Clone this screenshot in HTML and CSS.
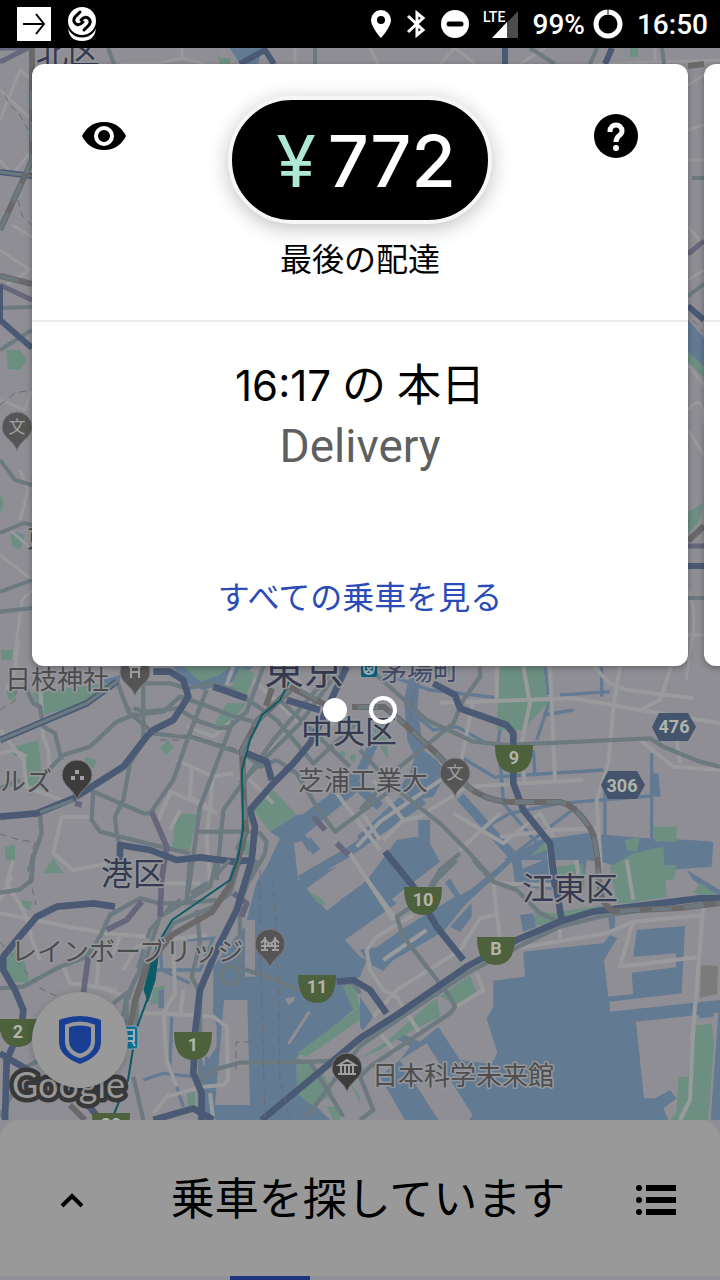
FILE: index.html
```html
<!DOCTYPE html>
<html lang="ja">
<head>
<meta charset="utf-8">
<meta name="viewport" content="width=device-width, initial-scale=1">
<title>乗車を探しています</title>
<link rel="stylesheet" href="styles.css">
</head>
<body>
<div class="screen">
  <svg class="map" viewBox="0 0 720 1280" preserveAspectRatio="xMidYMid slice" role="img" aria-label="地図">
    <rect class="land" width="720" height="1280"/>

    <!-- water -->
    <g class="water">
      <g transform="translate(0 640) scale(.33333)">
        <path d="M1080 430L1010 455L930 520L890 525L810 575L840 595L800 680L770 725L735 860L700 900L640 980L640 1100L600 1300L610 1440H2160V640H1440L1180 560Z"/>
        <path d="M520 80L560 130L610 150L700 125L760 80Z"/>
        <path d="M310 120L360 105L360 135L320 140Z"/>
      </g>
      <path d="M230 48L262 48L258 64L240 64Z"/>
    </g>

    <!-- reclaimed ground and canals -->
    <g transform="translate(360 860) scale(.33333)">
      <path class="land" d="M110 130L20 62L-100 152L-160 85L-70 20L-185 62L-198 -50L-175 -58L-155 -25L-140 -45L-165 -75L10 -220L120 -330L330 -60L560 -200L1080 -200V420L1000 428L750 455L748 425L965 400L975 198L830 210L820 290L948 280L948 322L815 338L820 402L745 410L732 300L772 235L750 225L730 250L515 272L490 275L495 350L400 362L400 440L380 475L412 578L395 612L300 600L235 500L180 545L150 560L120 600L200 550L290 690L338 765L320 790L235 780L120 600L60 650L140 790H-80L-150 720L-190 650V590L-20 450L-50 380L0 350L20 300L0 290L-45 240Z"/>
      <path class="land" d="M828 485L1015 465L1020 475L1058 472L1062 458L1075 458L1052 780H925L910 745L950 715L930 690L885 715L852 715Z"/>
      <g class="water">
        <path d="M0 80L20 62L110 -60L170 -70L240 5L130 90L0 195L-30 225L-60 120ZM0 270L20 300L40 318L70 332L100 300L250 215L310 140L330 120L440 20L470 -10L440 0L330 90L300 105L270 55L255 68L285 110L130 205L50 262Z"/>
        <path d="M270 200L335 130L335 170L300 215ZM480 30L550 0L570 -20L575 90L490 80ZM480 165L520 160L530 200L490 215ZM745 170L765 170L765 210L750 215ZM100 530L125 520L180 545L150 560Z"/>
        <path d="M430 0L540 -60L680 -80L860 -65L990 -60L1060 -55L1055 20L920 30L820 35L740 10L680 0L670 90L650 0Z"/>
        <path d="M980 30L1080 90V120L1000 60ZM0 410L40 470L10 510L0 500Z"/>
      </g>
    </g>

    <g class="canal" transform="translate(360 640) scale(.33333)">
      <path class="fill" d="M150 100L180 110L172 200L190 330L230 360L260 400L220 470L160 480L120 440L150 400L165 350L142 300L132 180ZM175 540L210 540L210 610L240 665L110 740L60 700L175 620ZM870 400L895 400L902 470L870 470Z"/>
      <path class="wide" d="M300 470L470 660L480 740M0 600L130 480M-180 720L-40 640L60 570L190 480M-240 590L-90 480L0 400L50 290M60 500L-50 400M-160 600L-130 635"/>
      <path d="M875 340V600M735 390V610M410 410L730 390M380 560L450 520L600 490L870 468M440 660L650 500M0 60L40 30M70 100L210 150L430 175L560 165M555 80L565 165M435 180L415 300L430 480M570 180L530 300M550 225L640 210M725 80V170M160 220L220 270L290 260L380 310M310 355L410 415M600 165L750 155M520 330L525 410M430 490L540 620"/>
    </g>

    <!-- Shinagawa quays -->
    <g transform="translate(0 860) scale(.33333)">
      <path class="land" d="M735 180H765V350H735ZM672 420H742L750 735H645ZM855 415L885 410L880 425L865 435ZM600 400L625 400L650 500V560L610 620ZM470 340L560 370L580 620L420 660L470 430Z"/>
      <path class="quay" d="M865 552L928 455"/>
      <path class="canal" d="M560 240L640 235L600 330L470 330M515 470L510 620L550 740M430 660L490 640L580 650M480 240L485 330L570 370M620 590V720"/>
      <path class="water" d="M475 388H492V445H475ZM755 440L775 430V780H755Z"/>
    </g>

    <!-- parks -->
    <g class="park">
      <g transform="translate(0 640) scale(.33333)">
        <path d="M95 160L350 125L330 150L260 190L130 225ZM30 325L115 300L125 400L90 470L75 400L80 360L40 345ZM255 350L290 360L280 385L255 375ZM480 325L505 300L520 320L500 345ZM550 80H690L660 105L600 125ZM720 80L765 100L740 165L690 150ZM680 190L740 190L700 240L660 265L645 250ZM525 545L550 520L590 525L570 630L515 625ZM760 510L820 450L890 525L810 575ZM15 620L45 615V670L15 655ZM130 700L160 655L190 700ZM5 30H38V60L5 55ZM730 600H748V645H730ZM20 150L50 150L45 180H25Z"/>
        <path d="M1580 80L1630 80L1642 190L1570 270H1490L1500 80M1320 80H1350V110ZM1960 560H2030V605H1965ZM1875 600L1920 590L1910 635L1880 630ZM1950 675H2030L2020 720H1940ZM1120 270L1155 240L1165 360L1140 320ZM1020 335L1035 332L1035 350L1020 350ZM1050 345L1068 342L1065 365L1050 360Z"/>
      </g>
      <g transform="translate(0 860) scale(.33333)">
        <path d="M20 300L60 250L75 310L90 370L40 365L15 340ZM65 120L97 125L90 150L65 140ZM460 385L495 375V390H475V430L450 435ZM920 90L970 120L975 135L955 130ZM890 590L970 640L1000 700L940 740L890 700ZM890 580L1080 440V480L920 590ZM1030 380L1060 370L1080 440L1060 450ZM560 700L585 695V740L565 740ZM980 740L1020 740V780H1000ZM1040 650L1080 710V730Z"/>
      </g>
      <g transform="translate(360 860) scale(.33333)">
        <path d="M0 595L85 540L210 430L330 345L350 395L290 440L230 400L240 470L160 510L60 570ZM525 150L570 160L730 135L700 160L590 195L525 195ZM590 20L670 10V80L600 120ZM750 20L820 -20L910 -40L920 110L810 130L770 130ZM1000 100L1020 70L1080 110V120ZM1010 495L1055 492L1062 550L1045 780H930L950 755L955 650L985 650ZM510 -10L560 -60L560 -30Z"/>
      </g>
      <path d="M6 350L20 350L27 360L20 370L8 369ZM0 494Q6 503 0 513ZM10 530L25 535L20 550L12 546ZM1 650H12V660H1ZM688 352L704 366V378L688 362ZM688 512L704 503L698 523L688 533ZM216 50L220 64H230V58H220L214 48ZM630 48H638V57H630Z"/>
    </g>
    <path class="water" d="M688 320L704 338V366L688 352Z"/>
    <path class="station-yard" d="M701 965L718 966L717 994L700 998Z"/>

    <!-- minor streets -->
    <g class="street">
      <g transform="translate(0 640) scale(.33333)">
        <path d="M0 270L70 360L80 440L210 490M150 50L120 130L130 290L145 330L150 400M55 0L45 90L20 150M185 530L160 640L220 690L330 670M185 530H270M530 360L640 410L700 400M575 380L570 470L640 510M640 400L620 600L630 720M500 450L570 480L650 520M470 550L510 460M700 240L640 290L560 260M700 80L670 160M760 120L900 250M860 80L1000 250M900 250L790 350M1000 250L900 350M730 400L820 490M0 340L40 330L80 350M510 570L540 510"/>
        <path d="M1320 188L1720 175L1920 210L2160 250M1570 80L1590 190L1560 330L1575 430M1650 80L1665 420M1860 80L1840 200L1825 370L1790 480L1805 720M1420 180L1380 380L1140 545L1070 620M1490 80V180M1780 80L1830 130L1880 150L2080 175M2020 60L1980 180L1920 210M2020 230L2040 370M1920 300L2020 380L2160 390M1210 540L1260 530L1400 440L1750 420M1080 510L1140 600M1500 590L1660 570L1800 565M1640 570L1655 720M1360 520L1510 610L1620 520L1660 590M1380 630L1500 520M1010 460L1140 630M1050 640L1180 840M1120 420L1210 540L1150 600"/>
      </g>
      <g transform="translate(0 860) scale(.33333)">
        <path d="M0 160L80 175L230 205L320 220L440 230M40 0L20 70L70 150L100 250L120 300M300 230L290 380L380 410M430 460H490L640 470L680 500L685 660L670 675L610 680L500 710M490 460L500 600L530 680M520 240L525 400L490 460M550 390L540 470M370 330L410 260L500 240L620 225M0 120L35 50M190 320L210 370L350 390M450 70L600 70M360 230L330 300M510 700L460 760M630 700L640 780"/>
      </g>
      <g transform="translate(360 860) scale(.33333)">
        <path d="M0 30L110 180M160 165L50 230L20 270L30 330L70 390L110 410L180 520M40 470L110 390L300 270L360 175L405 165M400 70L420 240M470 265L740 220L820 185L1030 165M1030 140L1000 500L990 720L960 780M820 180L780 320L1010 292M800 0L820 120M350 340L370 390L290 440M60 520L110 580M600 200V235M650 0L655 50L580 75L400 70M70 300L200 210"/>
      </g>
      <path d="M0 90L32 120M0 120L20 70L32 80M0 160L12 175L32 150M0 250L30 270L6 285M12 225L32 237M0 400L25 410L32 390M20 470L28 490L20 520M0 555L32 580M14 660L22 600L32 590M10 530L30 548M688 85L704 75M688 130L704 125M688 160H704M688 226L704 246M688 280L704 270M688 365L704 385M688 410Q704 390 704 425M688 430L704 455M688 590Q697 610 692 640L686 680M704 635H688M182 48V58L160 63M182 58L205 64M120 64L160 63M370 48L378 64M440 64L455 48L475 64M520 64L545 48M590 64L720 60M655 48V62M295 48V64"/>
    </g>

    <!-- main roads -->
    <g class="road">
      <g transform="translate(0 640) scale(.33333)">
        <path d="M70 130L100 190L120 200L130 260L165 280L185 360M150 385L190 345L270 320L350 245L400 225L490 215L540 170L600 190L690 225L760 245M0 445L60 420M430 130V300M350 120L385 215L460 280L540 290H570L740 345L780 380L830 360M430 130L510 130L560 145L640 130L700 150L760 190L830 240L940 370L1080 240M400 205L440 215L530 205L600 245L660 265L690 260L740 215L790 80M620 150L565 290L520 420L450 520H430L360 490L270 450M440 290L390 370L370 480L345 530L350 580L360 620V700M280 450L275 540L300 575L440 610L570 640M700 240L600 500L570 720L560 780M1000 90L820 300L670 510L650 720M590 575H740L780 580L800 605L795 640L750 720M830 360L890 400L950 500L1005 575L1200 430M120 520L125 580L100 650L95 720M1040 60L900 250L720 430M840 180L1050 380"/>
        <path d="M1080 60L1180 150L1280 240L1420 305L1520 315L1950 295L1990 320L2100 365L2160 380M1440 80V110L1390 180L1360 250L1200 380L1080 510M1080 330L1180 440L1320 550L1400 630L1480 720M1380 640L1320 690L1290 740"/>
      </g>
      <g transform="translate(0 860) scale(.33333)">
        <path d="M0 98L60 88L95 60V0M0 385L70 380L180 320L260 290L300 230L330 165L420 115L480 130H550L650 120M600 780V400L575 350L600 250L590 150M770 0L720 130V320M600 670L640 630L720 608L930 605L1080 600M400 650L430 780M0 770L80 620L120 600M1030 770L930 605M560 120L570 0M650 0L630 80L480 170L440 290L380 410V500M340 430L380 400L370 470M720 0L690 100L640 140L520 190L460 290L410 420V500"/>
        <circle cx="690" cy="345" r="28"/>
        <path d="M725 325L800 350L900 390M1010 365L1060 370L1080 400"/>
      </g>
      <g transform="translate(360 860) scale(.33333)">
        <path d="M340 0L400 65L470 90L540 160L600 185M290 0L230 60L200 110L110 170L130 230L270 410L285 440L270 460L30 620L0 650L40 750L0 780M-160 770L0 558L105 485L320 340L480 258L600 200L720 170L850 150"/>
      </g>
      <path d="M0 460L15 480L32 485M0 533L24 523L32 525M0 592L32 580M0 308L32 307M0 350L32 330M0 612L32 608M692 178H704M688 296L704 284M688 598H704M108 48L114 64M315 48V64M530 48L555 64M590 64L597 48M662 48L664 64"/>
    </g>

    <g class="branch">
      <g transform="translate(0 640) scale(.33333)"><path d="M455 515L500 620L485 720L480 830M940 530L975 570M1010 610L1045 645M225 490L245 495"/></g>
      <g transform="translate(0 860) scale(.33333)"><path d="M425 125L380 180L320 210M265 290L250 400M700 100L740 130L725 170"/></g>
      <path d="M0 285L32 300M0 48H28L0 62M688 254L704 241M688 546H704"/>
    </g>

    <!-- expressways -->
    <g class="express">
      <g transform="translate(0 640) scale(.33333)">
        <path d="M0 300L260 190L350 125M0 530L110 520L220 475L370 380L440 290L460 270L520 240L565 170L550 120L510 95L460 95M360 700V615L450 630L530 660L600 652L700 665L755 660L765 560L750 510L820 430L880 370L930 310L970 230L1040 80M740 340L800 365L815 420M860 180L960 210M1300 130L1365 165L1380 205L1520 255L1540 280V430L1570 510L1650 610L1665 740M1155 635L1240 740L1310 860L1390 960M640 140L740 175"/>
      </g>
      <g transform="translate(0 860) scale(.33333)">
        <path d="M345 140L280 130L170 140L110 170L50 240L10 290V330L45 390L70 450L65 500L20 600L15 780M755 0L710 150L650 270L600 390L585 520L580 640L605 700V780M0 580L100 640M460 780L580 745L640 780M1010 365L1060 360L1110 390L1160 460M785 780L1080 535L1190 465L1400 320L1550 240L1680 185L1780 155L2100 115H2160M1655 0L1685 180M230 690L300 780"/>
      </g>
      <path d="M0 172L32 176M0 285V320L32 348M688 306L704 320M688 566H704M505 48V64M605 64L612 48M240 64L265 50L274 64"/>
    </g>
    <g class="road inner">
      <g transform="translate(0 640) scale(.33333)">
        <path d="M0 300L260 190L350 125M120 517L220 480"/>
      </g>
      <path d="M0 172L32 176M0 611L32 608"/>
    </g>

    <!-- railways -->
    <g class="rail">
      <path d="M32 48V160L0 230M0 276L32 284M688 66L704 64M688 541L704 526M352 707H384L400 720L437 754L455 773Q475 800 510 802H560Q575 805 590 828Q597 840 599 880Q601 908 615 911L680 908L720 903M290 687L328 706M272 688L266 706M290 690L258 720L242 750L244 800L246 830L238 860L230 885L212 912L172 935L147 965L135 1000L128 1040M242 850L245 820M70 1105L85 1120"/>
    </g>
    <g class="rail-gap">
      <path d="M32 90V160L0 230M0 276L32 284M358 707H384L400 720L437 754L455 773Q475 800 510 802H560Q575 805 590 828Q597 840 599 880M620 911L680 908L720 903M300 690L328 706M290 690L258 720L242 750L244 800L246 830L234 855L212 880L172 905L150 930L128 1000"/>
    </g>
    <path class="loop-line" d="M289 682L280 700L262 715L250 740L242 770L243 830L238 858L230 880L172 920L157 945L153 970L147 1000L136 1030L128 1080L114 1114"/>
    <path class="loop-bed" d="M153 960L157 957L154 980L148 998L145 990Z"/>
    <g class="tunnel">
      <path d="M127 705L160 740L180 740L190 735L240 750M0 834L20 840L35 842L28 870L36 905M0 942L40 988L58 997M5 95L10 105L20 115L28 130M0 405L15 393L32 390M18 200L22 215L32 225M693 320L703 332M0 710L16 700V690M260 870V930L265 1120M273 880L278 960L280 1080L290 1120M410 720L417 675M236 1070V1042H250"/>
    </g>

    <!-- road shields -->
    <g class="shields">
      <path d="M495 745H533Q533 773 514 773T495 745ZM404 887H442Q442 915 423 915T404 887ZM477 937H515Q515 965 496 965T477 937ZM298 975H336Q336 1003 317 1003T298 975ZM174 1032H212Q212 1060 193 1060T174 1032ZM-1 1019H37Q37 1047 18 1047T-1 1019ZM92 1113H130Q130 1141 111 1141T92 1113Z"/>
      <text x="514" y="764">9</text><text x="423" y="906">10</text><text x="496" y="955">B</text><text x="317" y="993">11</text><text x="193" y="1051">1</text><text x="18" y="1038">2</text><text x="111" y="1131">20</text>
    </g>
    <g class="shields route">
      <path d="M659 713H688L696 727L688 741H659L652 727ZM608 771H637L645 785L637 799H608L601 785Z"/>
      <text x="674" y="733">476</text><text x="622" y="792">306</text>
    </g>

    <!-- stations and pins -->
    <g class="station"><rect x="361" y="660" width="16" height="17" rx="2"/><path d="M364 665Q363 674 369 674T374 665M366 672L372 667M367 667L372 673"/></g>
    <g class="station bright"><rect x="120" y="1026" width="18" height="23" rx="3"/><path d="M125 1030H134V1041H125ZM125 1036H134M127 1041L124 1046M132 1041L135 1046"/></g>
    <g class="pin">
      <g transform="translate(135 672)"><path d="M0 24C-3 13-15 11-15 0A15 15 0 0 1 15 0C15 11 3 13 0 24Z"/><path class="glyph" d="M-6-5H6M-5 0H5M-4-5V6M4-5V6"/></g>
      <g transform="translate(455 773)"><path d="M0 24C-3 13-15 11-15 0A15 15 0 0 1 15 0C15 11 3 13 0 24Z"/><text y="6">文</text></g>
      <g transform="translate(17 427)"><path d="M0 24C-3 13-15 11-15 0A15 15 0 0 1 15 0C15 11 3 13 0 24Z"/><text y="6">文</text></g>
      <g transform="translate(270 944)"><path d="M0 24C-3 13-15 11-15 0A15 15 0 0 1 15 0C15 11 3 13 0 24Z"/><path class="glyph" d="M-9 2H9M-5-7V7M5-7V7M-9 6H-2M2 6H9M-9-1L-5-5Q0 4 5-5L9-1M-2 0V2M2 0V2"/></g>
      <g class="dark" transform="translate(77 775)"><path d="M0 25C-3 14-15 11-15 0A15 15 0 0 1 15 0C15 11 3 14 0 25Z"/><path class="solid" d="M-2-5H2V-1H-2ZM-6 1H-2V5H-6ZM3 1H7V5H3Z"/></g>
      <g class="dark" transform="translate(347 1068)"><path d="M0 24C-3 13-15 11-15 0A15 15 0 0 1 15 0C15 11 3 13 0 24Z"/><path class="glyph" d="M-8-3L0-8L8-3ZM-6-2V5M-2-2V5M2-2V5M6-2V5M-9 6H9"/></g>
    </g>

    <!-- place names -->
    <g class="places">
      <text class="poi" x="5" y="689">日枝神社</text>
      <text class="poi" x="0" y="791">ルズ</text>
      <text class="poi" x="298" y="790">芝浦工業大</text>
      <text class="poi" x="11" y="961">レインボーブリッジ</text>
      <text class="poi" x="372" y="1085">日本科学未来館</text>
      <text class="poi" x="27" y="548">東</text>
      <text class="stop" x="381" y="680">茅場町</text>
      <text class="ward" x="36" y="64">北区</text>
      <text class="city" x="264" y="684">東京</text>
      <text class="ward" x="301" y="743">中央区</text>
      <text class="ward" x="101" y="885">港区</text>
      <text class="ward" x="522" y="900">江東区</text>
      <text class="brand" x="12" y="1098">Google</text>
    </g>
  </svg>

  <header class="status">
    <div class="status-group notices">
      <svg width="34" height="34" viewBox="0 0 34 34" aria-hidden="true"><path fill="#fff" d="M0 0H34V34H0Z"/><path d="M6 17H27M19 7L27 17L19 27" fill="none" stroke="#000" stroke-width="2"/></svg>
      <svg width="30" height="36" viewBox="0 0 30 36" aria-hidden="true"><path d="M1 20Q1 35 15 35T29 20" fill="#fff"/><circle cx="15" cy="16" r="15.500" fill="#000"/><circle cx="15" cy="15" r="14" fill="#fff"/><path d="M13 6L8 11Q5 15 9 18Q12 20 16 16M17 24L22 19Q25 15 21 12Q18 10 14 14" fill="none" stroke="#000" stroke-width="3" stroke-linecap="round"/></svg>
    </div>
    <div class="status-group">
      <svg width="20" height="28" viewBox="0 0 20 28" aria-hidden="true"><path fill="#fff" fill-rule="evenodd" d="M10 0A10 10 0 0 0 0 10C0 17 10 28 10 28S20 17 20 10A10 10 0 0 0 10 0ZM10 6A4 4 0 1 1 10 14A4 4 0 0 1 10 6Z"/></svg>
      <svg class="bluetooth" width="18" height="28" viewBox="0 0 18 28" aria-hidden="true"><path d="M1 6L16 20L10 25V3L16 8L1 22" fill="none" stroke="#fff" stroke-width="3"/></svg>
      <svg width="28" height="28" viewBox="0 0 28 28" aria-hidden="true"><circle cx="14" cy="14" r="14" fill="#fff"/><path d="M8 14H20" stroke="#000" stroke-width="5" stroke-linecap="round"/></svg>
      <svg class="signal" width="36" height="30" viewBox="0 0 36 30" aria-hidden="true"><path fill="#4c4c4c" d="M35 2V29H9Z"/><path fill="#fff" d="M24 13V29H9Z"/><text x="0" y="13">LTE</text></svg>
      <span class="battery">99%</span>
      <svg width="30" height="30" viewBox="0 0 30 30" aria-hidden="true"><circle cx="15" cy="15" r="12" fill="none" stroke="#fff" stroke-width="5"/><path d="M15 0V5" stroke="#000" stroke-width="1"/></svg>
      <time class="clock">16:50</time>
    </div>
  </header>

  <main class="stage">
    <section class="carousel" aria-label="収入">
      <article class="card">
        <div class="card-top">
          <button class="icon-button" type="button" aria-label="金額を隠す">
            <svg width="44" height="28" viewBox="0 0 44 28"><path d="M22 0C11 0 4 6 0 14C4 22 11 28 22 28S40 22 44 14C40 6 33 0 22 0Z"/><circle cx="22" cy="14" r="8" fill="#000" stroke="#fff" stroke-width="4"/></svg>
          </button>
          <div class="summary">
            <p class="amount"><span class="yen">¥</span><span>772</span></p>
            <p class="caption">最後の配達</p>
          </div>
          <button class="icon-button" type="button" aria-label="ヘルプ">
            <svg width="44" height="44" viewBox="0 0 44 44"><circle cx="22" cy="22" r="22"/><path d="M16 18V17C16 9 28 9 28 17C28 22 22 21 22 28" fill="none" stroke="#fff" stroke-width="5"/><circle cx="22" cy="34" r="3" fill="#fff"/></svg>
          </button>
        </div>
        <div class="card-body">
          <h2 class="when"><time>16:17</time> の 本日</h2>
          <p class="kind">Delivery</p>
          <a class="all-trips" href="#trips">すべての乗車を見る</a>
        </div>
      </article>
      <article class="card" aria-hidden="true">
        <div class="card-top"></div>
        <div class="card-body"></div>
      </article>
    </section>
    <div class="pager">
      <button class="dot current" type="button" aria-label="1"></button>
      <button class="dot" type="button" aria-label="2"></button>
    </div>
    <button class="safety" type="button" aria-label="セーフティ">
      <svg width="42" height="48" viewBox="0 0 42 48"><path fill="#183f93" d="M0 4Q21-4 42 4V26Q42 40 21 48Q0 40 0 26Z"/><path fill="#183f93" stroke="#999" stroke-width="4" d="M8 10Q21 5 34 10V25Q34 36 21 40Q8 36 8 25Z"/></svg>
    </button>
  </main>

  <footer class="sheet">
    <div class="sheet-row">
      <button class="icon-button" type="button" aria-label="開く">
        <svg width="24" height="16" viewBox="0 0 24 16"><path d="M2 14L12 4L22 14" fill="none" stroke="#000" stroke-width="4"/></svg>
      </button>
      <h1 class="sheet-title">乗車を探しています</h1>
      <button class="icon-button" type="button" aria-label="一覧">
        <svg width="40" height="30" viewBox="0 0 40 30"><path d="M10 0H40V6H10ZM10 12H40V18H10ZM10 24H40V30H10Z"/><circle cx="3" cy="3" r="3"/><circle cx="3" cy="15" r="3"/><circle cx="3" cy="27" r="3"/></svg>
      </button>
    </div>
    <div class="track"><div class="track-bar"></div></div>
  </footer>
</div>
</body>
</html>
```

FILE: styles.css
```css
* { box-sizing: border-box; }

body {
  margin: 0;
  font-family: Roboto, "Noto Sans CJK JP", sans-serif;
  color: #000;
}

h1, h2, p { margin: 0; font-weight: 400; }

button {
  border: 0;
  padding: 0;
  background: none;
  display: grid;
  place-items: center;
}

.screen {
  display: grid;
  grid-template-columns: minmax(0, 1fr);
  grid-template-rows: auto 1fr auto;
  min-height: 100vh;
  overflow: hidden;
}

/* Map */
.map {
  grid-area: 1 / 1 / -1 / -1;
  width: 100%;
  height: 100%;
  min-height: 0;
}
.status { grid-area: 1 / 1; }
.stage { grid-area: 2 / 1; }
.sheet { grid-area: 3 / 1; }

.land { fill: #8f8e94; }
.water, .canal .fill { fill: #637a93; stroke: none; }
.park { fill: #6c8f82; }
.station-yard { fill: #7b7b7b; }
.canal { fill: none; stroke: #637a93; stroke-width: 10; }
.canal .wide { stroke-width: 28; }
.quay { fill: none; stroke: #8f8e94; stroke-width: 9; }
.street, .road, .branch, .express, .rail, .rail-gap, .loop-line, .tunnel {
  fill: none;
  stroke-linejoin: round;
}
.street { stroke: #999a9b; stroke-width: 3; }
.street g { stroke-width: 12; }
.road { stroke: #6c7a80; stroke-width: 4; }
.road g { stroke-width: 13; }
.branch { stroke: #66667c; stroke-width: 5; }
.branch g { stroke-width: 17; }
.express { stroke: #4a5a75; stroke-width: 6; }
.express g { stroke-width: 20; }
.road.inner { stroke-width: 3; }
.road.inner g { stroke-width: 10; }
.rail { stroke: #6a6869; stroke-width: 6; }
.rail-gap { stroke: #6c7a80; stroke-width: 4; stroke-dasharray: 20 12; }
.loop-line { stroke: #0b5c66; stroke-width: 2; }
.loop-bed { fill: #0b5c66; stroke: #0b5c66; stroke-width: 3; }
.tunnel { stroke: #6b6b70; stroke-width: 1; stroke-dasharray: 7 5; }

.shields path { fill: #4d613d; }
.shields text {
  fill: #b0b4ac;
  font-size: 18px;
  font-weight: 700;
  text-anchor: middle;
}
.shields.route path { fill: #44546c; }
.station rect { fill: #0b5d7c; }
.station.bright rect { fill: #0d7398; stroke: #8fa9b3; stroke-width: 1; }
.station path { fill: none; stroke: #a0b0b5; stroke-width: 2; }

.pin path { fill: #555; stroke: #7e7e81; stroke-width: 1; }
.pin .dark path { fill: #3c3c3c; }
.pin .glyph, .pin .dark .glyph { fill: none; stroke: #a0a0a0; stroke-width: 2; }
.pin .dark .solid { fill: #a0a0a0; stroke: none; }
.pin text { fill: #a0a0a0; font-size: 17px; text-anchor: middle; }

.places text {
  paint-order: stroke;
  stroke: #96979a;
  stroke-width: 3;
  stroke-linejoin: round;
}
.places .poi { font-size: 26px; fill: #4d4d4f; }
.places .stop { font-size: 26px; fill: #40496a; }
.places .ward { font-size: 32px; fill: #353a50; }
.places .city { font-size: 40px; fill: #353a50; }
.places .brand {
  font-family: Lato, sans-serif;
  font-size: 36px;
  fill: #999;
  stroke: #383838;
  stroke-width: 9;
}

/* Status bar */
.status {
  display: flex;
  justify-content: space-between;
  align-items: center;
  height: 48px;
  padding: 0 12px 0 17px;
  background: #000;
  color: #fff;
  font-size: 28px;
  font-weight: 500;
}
.status-group { display: flex; align-items: center; gap: 14px; }
.notices { gap: 16px; }
.bluetooth { margin: 0 2px; }
.signal text { fill: #fff; font-size: 14px; font-weight: 500; }
.battery { margin-right: -6px; }

/* Cards */
.stage { display: flex; flex-direction: column; min-width: 0; }
.carousel {
  display: flex;
  gap: 16px;
  padding: 16px 32px 0;
}
.card {
  flex: 0 0 100%;
  display: flex;
  flex-direction: column;
  min-height: 602px;
  border-radius: 12px;
  background: #fff;
  box-shadow: 0 2px 6px rgba(0, 0, 0, .3);
}
.card-top {
  display: flex;
  justify-content: space-between;
  align-items: flex-start;
  min-height: 258px;
  padding: 32px 50px 36px;
  border-bottom: 2px solid #ebebeb;
}
.icon-button { width: 44px; height: 80px; }
.summary {
  display: flex;
  flex-direction: column;
  align-items: center;
  gap: 12px;
}
.amount {
  display: flex;
  align-items: center;
  justify-content: center;
  gap: 12px;
  min-width: 264px;
  height: 128px;
  padding: 0 32px 0 44px;
  border: 4px solid #f6f6f6;
  border-radius: 64px;
  background: #000;
  box-shadow: 0 4px 20px rgba(0, 0, 0, .25);
  color: #fff;
  font-family: Inter, sans-serif;
  font-size: 72px;
  font-weight: 500;
}
.yen { color: #aee8d4; font-weight: 400; }
.caption { font-size: 32px; line-height: 48px; }
.card-body {
  flex: 1;
  display: flex;
  flex-direction: column;
  align-items: center;
  padding: 32px 32px 44px;
}
.when { font-size: 44px; line-height: 64px; }
.when time { font-family: Inter, sans-serif; font-size: 42px; }
.kind { color: #5f5f5f; font-size: 46px; line-height: 56px; }
.all-trips {
  margin-top: auto;
  color: #2a4bb8;
  font-size: 32px;
  line-height: 48px;
  text-decoration: none;
}

.pager {
  display: flex;
  justify-content: center;
  align-items: center;
  gap: 22px;
  margin-top: 30px;
}
.dot {
  width: 28px;
  height: 28px;
  border: 4px solid #fff;
  border-radius: 50%;
}
.dot.current { width: 24px; height: 24px; background: #fff; }

.safety {
  width: 96px;
  height: 96px;
  margin: auto 0 32px 32px;
  border-radius: 50%;
  background: #999;
  box-shadow: 0 2px 8px rgba(0, 0, 0, .2);
}

/* Bottom sheet */
.sheet {
  border-radius: 20px 20px 0 0;
  background: #999;
  overflow: hidden;
}
.sheet-row {
  display: flex;
  align-items: center;
  height: 156px;
  padding: 4px 42px 0 50px;
}
.sheet-title {
  flex: 1;
  padding-left: 8px;
  font-size: 44px;
  line-height: 64px;
  text-align: center;
}
.track { height: 4px; background: #8f9099; }
.track-bar { width: 11%; height: 100%; margin-left: 32%; background: #1d3580; }
```
